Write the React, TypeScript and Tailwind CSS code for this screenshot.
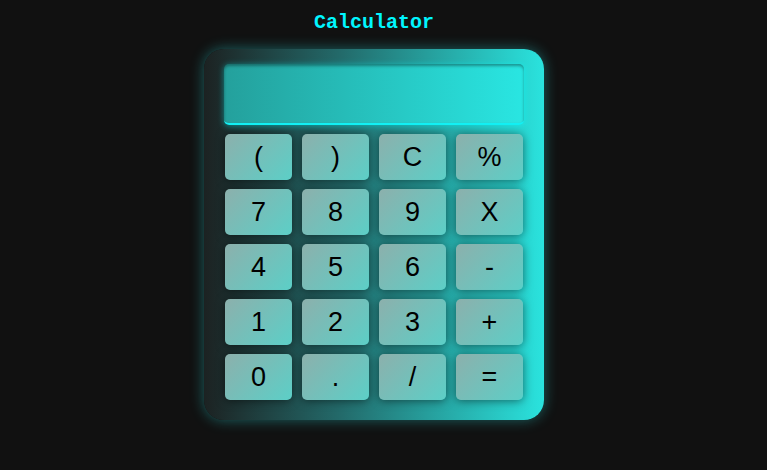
import React from 'react';

const keys = ['(', ')', 'C', '%', '7', '8', '9', 'X', '4', '5', '6', '-', '1', '2', '3', '+', '0', '.', '/', '='];

const App: React.FC = () => {
  return (
    <div className="min-h-[470px] w-full bg-[#111111] flex flex-col items-center pr-[19px]">
      <h1 className="pt-[9px] text-[20px] leading-[28px] font-bold text-[#00f6ff] [font-family:'Liberation_Mono','Courier_New',monospace]">
        Calculator
      </h1>
      <div className="mt-[12px] w-[340px] rounded-[20px] px-[20px] pt-[15px] pb-[20px] bg-[linear-gradient(to_right,#1c2222_0%,#236a6a_40%,#2ae3de_100%)] shadow-[0_0_14px_rgba(40,200,200,0.45)]">
        <div className="h-[61px] rounded-[5px] bg-[linear-gradient(to_right,#24a09c,#29e6e2)] border-b-2 border-[#12f0f4] shadow-[inset_0_2px_3px_rgba(0,0,0,0.35),0_1px_6px_rgba(0,255,255,0.45)]" />
        <div className="mt-[9px] px-[1px] grid grid-cols-4 gap-x-[10px] gap-y-[9px]">
          {keys.map((k) => (
            <button
              key={k}
              className="h-[46px] rounded-[5px] bg-[linear-gradient(135deg,#8cb0ac,#5ccfc7)] text-black text-[27px] leading-none [font-family:'Liberation_Sans',Arial,sans-serif] shadow-[0_1px_10px_rgba(0,0,0,0.5)] flex items-center justify-center"
            >
              {k}
            </button>
          ))}
        </div>
      </div>
    </div>
  );
};

export default App;
